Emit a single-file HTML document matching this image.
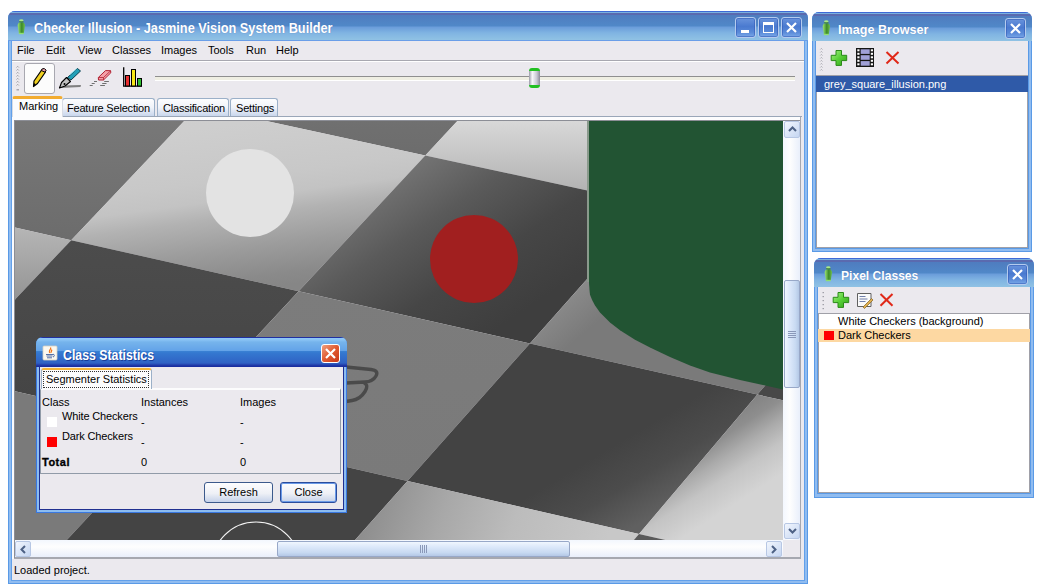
<!DOCTYPE html>
<html><head><meta charset="utf-8">
<style>
*{box-sizing:border-box;margin:0;padding:0}
html,body{width:1040px;height:587px;overflow:hidden;background:#fff;font-family:"Liberation Sans",sans-serif;font-size:11px;color:#000}
.abs{position:absolute}
.win{position:absolute;background:#90bcf0;border-radius:7px 7px 0 0;box-shadow:inset 0 0 0 1px #5a9ae6}
.tb{position:absolute;left:0;right:0;top:0;height:30px;border-radius:7px 7px 0 0;
 background:linear-gradient(#3d6ad6 0px,#3d6ad6 1px,#7ab0e0 1px,#7ab0e0 2px,#5a6aaf 2px,#5a6aaf 4px,#4f7cbf 4px,#5088c8 15px,#6a9cda 16px,#80b4e2 22px,#90c2e4 29px,#6a9ee8 29px)}
.ttl{position:absolute;color:#fff;font-weight:bold;font-size:13px;white-space:nowrap;text-shadow:0 0 1px rgba(60,90,160,.6)}
.face{position:absolute;background:#ebe9ee}
.tbtn{position:absolute;width:21px;height:21px;border:1px solid #b4cbee;border-radius:3px;
 background:linear-gradient(#6a94dc,#4a7ad0 45%,#5a8ad8 75%,#7aa8e8);box-shadow:inset 0 0 0 1px rgba(50,90,180,.55)}
.menu span{position:absolute;top:44px}
.tab{position:absolute;height:18px;top:98px;border:1px solid #9bb0c8;border-bottom:none;border-radius:3px 3px 0 0;
 background:linear-gradient(#fdfdfe,#f0f3f9 50%,#c9d6ec);padding:0 0 0 5px;line-height:18px;white-space:nowrap;letter-spacing:-0.2px}
.sbtn{position:absolute;width:16px;height:16px;border:1px solid #b7c7e4;border-radius:2px;background:linear-gradient(135deg,#f2f6fd,#c5d6f2)}
</style></head><body>

<!-- MAIN WINDOW -->
<div class="win" style="left:8px;top:11px;width:800px;height:573px">
  <div class="tb"></div>
</div>
<div class="abs" style="left:17px;top:19px;width:8px;height:15px">
  <svg width="9" height="16" viewBox="0 0 9 16"><defs><linearGradient id="jv" x1="0" x2="1"><stop offset="0" stop-color="#a0e878"/><stop offset="0.55" stop-color="#3c8a28"/><stop offset="1" stop-color="#70c050"/></linearGradient></defs><ellipse cx="4.3" cy="1.6" rx="2.2" ry="1.3" fill="#a8e888"/><rect x="2.2" y="2.4" width="4.2" height="1" fill="#2a6a20"/><path d="M1.8 3.4h5l1.3 2.6-1.3 8.2h-4.9l-1.3-8.2z" fill="url(#jv)"/><rect x="1.8" y="13.8" width="5" height="1.4" fill="#90e070"/></svg>
</div>
<div class="ttl" style="left:34px;top:21px;transform:scale(0.98,1.1);transform-origin:0 100%">Checker Illusion - Jasmine Vision System Builder</div>
<div class="tbtn" style="left:735px;top:17px"><div class="abs" style="left:5px;top:12px;width:8px;height:3px;background:#fff"></div></div>
<div class="tbtn" style="left:758px;top:17px"><div class="abs" style="left:4px;top:4px;width:11px;height:11px;border:1px solid #fff;border-top-width:3px"></div></div>
<div class="tbtn" style="left:781px;top:17px"><svg class="abs" style="left:3px;top:3px" width="13" height="13"><path d="M2 2L11 11M11 2L2 11" stroke="#fff" stroke-width="2.2"/></svg></div>

<div class="face" style="left:11px;top:41px;width:794px;height:540px;border:1px solid #62a0ea;border-top:none"></div>
<!-- menu -->
<div class="menu abs" style="left:0;top:0">
  <span style="left:17px">File</span><span style="left:46px">Edit</span><span style="left:78px">View</span><span style="left:112px">Classes</span><span style="left:161px">Images</span><span style="left:208px">Tools</span><span style="left:246px">Run</span><span style="left:276px">Help</span>
</div>
<div class="abs" style="left:12px;top:60px;width:792px;height:1px;background:#a8a8b0"></div>
<div class="abs" style="left:12px;top:61px;width:792px;height:1px;background:#fff"></div>

<!-- toolbar -->
<div class="abs" style="left:24px;top:63px;width:31px;height:31px;border:1px solid #a8a8b0;border-radius:3px;background:#fcfcfc"></div>
<svg class="abs" style="left:0;top:0" width="160" height="100" viewBox="0 0 160 100">
 <g fill="none" stroke="#9a9aa0" stroke-width="0.9">
  <path d="M16.5 67.5l1.2-1.2 1.2 1.2M16.5 70.5l1.2-1.2 1.2 1.2M16.5 73.5l1.2-1.2 1.2 1.2M16.5 76.5l1.2-1.2 1.2 1.2M16.5 79.5l1.2-1.2 1.2 1.2M16.5 82.5l1.2-1.2 1.2 1.2M16.5 85.5l1.2-1.2 1.2 1.2"/>
 </g>
 <rect x="16.5" y="89" width="2.5" height="1.5" fill="#a8a8b0"/>
 <!-- pencil -->
 <path d="M33.5 86.5 L34 81 L42 69.5 L45.5 72 L37.5 83.5 Z" fill="#f0d020" stroke="#000" stroke-width="1.2" stroke-linejoin="round"/>
 <path d="M41.3 70.5 L42.6 68.6 Q44.5 68 46.2 70.2 L45 72.2 Z" fill="#f0a0a8" stroke="#000" stroke-width="1"/>
 <path d="M33.5 86.5 L34 83 L35.8 84.3 Z" fill="#000"/>
 <!-- pen -->
 <path d="M59.5 86.5 L60.5 88 L80.5 87 L81 85 L63 85.5 Z" fill="#808080"/>
 <path d="M67.5 77.5 L77.5 68.5 L80.5 71 L71 80 Z" fill="#22a0b8" stroke="#0a4050" stroke-width="1"/>
 <path d="M70 74.5 L76.5 69" stroke="#80e0f0" stroke-width="1"/>
 <path d="M66.5 77.5 L70.5 81.5 L65 86 L59.5 88 L61.5 82.5 Z" fill="#c0c0c0" stroke="#000" stroke-width="1.1" stroke-linejoin="round"/>
 <circle cx="64.5" cy="84" r="1" fill="#000"/>
 <!-- eraser -->
 <path d="M98.3 77.5 L105.5 70.6 L110.6 70.7 L110.8 72.8 L103.5 80 L98.5 80 Z" fill="#f4a0a8" stroke="#b02030" stroke-width="1"/>
 <path d="M98.5 77.5 L103.5 77.5 L110.6 70.8 M103.5 77.5 L103.5 80" stroke="#b02030" stroke-width="0.8" fill="none"/>
 <path d="M94 81.5h3M104.2 81.5h4.7M91.7 83.5h3M102.2 83.5h4.3M89.7 85.5h3M100.2 85.5h4.7" stroke="#707070" stroke-width="1"/>
 <!-- chart -->
 <path d="M123.7 67.2 V86.2 H142" stroke="#000" stroke-width="1.3" fill="none"/>
 <rect x="125.5" y="75.5" width="4" height="10.5" fill="#e83030" stroke="#000" stroke-width="1"/>
 <rect x="131.5" y="69.5" width="4" height="16.5" fill="#f8e818" stroke="#000" stroke-width="1"/>
 <rect x="137.5" y="78.5" width="4" height="7.5" fill="#30c030" stroke="#000" stroke-width="1"/>
</svg>
<div class="abs" style="left:155px;top:76px;width:640px;height:1px;background:#8f8f8f"></div>
<div class="abs" style="left:155px;top:77px;width:640px;height:3px;background:#efeee2"></div>
<div class="abs" style="left:155px;top:80px;width:640px;height:1px;background:#fff"></div>
<div class="abs" style="left:529px;top:68px;width:11px;height:20px;border-radius:3px;background:linear-gradient(90deg,#9a9aa8,#f8f8fa 30%,#c8c8d4 70%,#8a8a98);border-top:3px solid #22c022;border-bottom:3px solid #22c022"></div>

<!-- tabs -->
<div class="tab" style="left:62px;width:93px;padding-left:4px">Feature Selection</div>
<div class="tab" style="left:157px;width:72px">Classification</div>
<div class="tab" style="left:230px;width:48px">Settings</div>
<div class="abs" style="left:12px;top:96px;width:51px;height:21px;border:1px solid #d8dce4;border-bottom:none;border-top:3px solid #f2ac30;border-radius:3px 3px 0 0;background:#fcfcfd;line-height:14px;padding-left:6px">Marking</div>
<div class="abs" style="left:63px;top:116px;width:739px;height:1px;background:#9aa6b8"></div>
<div class="abs" style="left:14px;top:117px;width:787px;height:4px;background:#fcfcfd"></div>

<!-- canvas -->
<svg class="abs" style="left:15px;top:121px" width="768" height="419" viewBox="15 121 768 419">
<defs>
<linearGradient id="c02" gradientUnits="userSpaceOnUse" x1="0" y1="121" x2="0" y2="240"><stop offset="0" stop-color="#787878"/><stop offset="1" stop-color="#6c6c6c"/></linearGradient>
<linearGradient id="c03" gradientUnits="userSpaceOnUse" x1="0" y1="227" x2="0" y2="300"><stop offset="0" stop-color="#b6b6b6"/><stop offset="1" stop-color="#949494"/></linearGradient>
<linearGradient id="c11" gradientUnits="userSpaceOnUse" x1="0" y1="121" x2="0" y2="160"><stop offset="0" stop-color="#707070"/><stop offset="1" stop-color="#6c6c6c"/></linearGradient>
<linearGradient id="c12" gradientUnits="userSpaceOnUse" x1="15.6" y1="118.8" x2="41.6" y2="316.8"><stop offset="0" stop-color="#cfcfcf"/><stop offset="0.17" stop-color="#cecece"/><stop offset="0.44" stop-color="#c8c8c8"/><stop offset="0.54" stop-color="#c3c3c3"/><stop offset="0.63" stop-color="#b2b2b2"/><stop offset="0.79" stop-color="#9c9c9c"/><stop offset="0.94" stop-color="#8a8a8a"/><stop offset="1" stop-color="#868686"/></linearGradient>
<linearGradient id="c13" gradientUnits="userSpaceOnUse" x1="0" y1="240" x2="0" y2="420"><stop offset="0" stop-color="#4c4c4c"/><stop offset="1" stop-color="#444444"/></linearGradient>
<linearGradient id="c14" gradientUnits="userSpaceOnUse" x1="0" y1="390" x2="0" y2="540"><stop offset="0" stop-color="#7a7a7a"/><stop offset="1" stop-color="#7a7a7a"/></linearGradient>
<linearGradient id="c21" gradientUnits="userSpaceOnUse" x1="0" y1="121" x2="0" y2="192"><stop offset="0" stop-color="#d8d8d8"/><stop offset="1" stop-color="#b2b2b2"/></linearGradient>
<linearGradient id="c22" gradientUnits="userSpaceOnUse" x1="440" y1="150" x2="540" y2="300"><stop offset="0" stop-color="#727272"/><stop offset="0.3" stop-color="#5a5a5a"/><stop offset="0.65" stop-color="#464646"/><stop offset="1" stop-color="#3e3e3e"/></linearGradient>
<linearGradient id="c23" gradientUnits="userSpaceOnUse" x1="0" y1="290" x2="0" y2="480"><stop offset="0" stop-color="#7c7c7c"/><stop offset="1" stop-color="#7a7a7a"/></linearGradient>
<linearGradient id="c24" gradientUnits="userSpaceOnUse" x1="0" y1="430" x2="0" y2="540"><stop offset="0" stop-color="#444444"/><stop offset="1" stop-color="#444444"/></linearGradient>
<linearGradient id="c32" gradientUnits="userSpaceOnUse" x1="575" y1="290" x2="600" y2="320"><stop offset="0" stop-color="#8a8a8a"/><stop offset="1" stop-color="#7a7a7a"/></linearGradient>
<linearGradient id="c33" gradientUnits="userSpaceOnUse" x1="640" y1="430" x2="681" y2="499"><stop offset="0" stop-color="#434343"/><stop offset="0.5" stop-color="#4c4c4c"/><stop offset="1" stop-color="#606060"/></linearGradient>
<linearGradient id="c34" gradientUnits="userSpaceOnUse" x1="380" y1="480" x2="600" y2="560"><stop offset="0" stop-color="#8e8e8e"/><stop offset="0.3" stop-color="#a8a8a8"/><stop offset="0.6" stop-color="#bcbcbc"/><stop offset="1" stop-color="#c8c8c8"/></linearGradient>
<linearGradient id="c42" gradientUnits="userSpaceOnUse" x1="0" y1="360" x2="0" y2="400"><stop offset="0" stop-color="#484848"/><stop offset="1" stop-color="#484848"/></linearGradient>
<linearGradient id="c43" gradientUnits="userSpaceOnUse" x1="725.7" y1="403.2" x2="774.3" y2="478.8"><stop offset="0" stop-color="#7c7c7c"/><stop offset="0.3" stop-color="#8e8e8e"/><stop offset="0.5" stop-color="#acacac"/><stop offset="0.7" stop-color="#c4c4c4"/><stop offset="1" stop-color="#d4d4d4"/></linearGradient>
<linearGradient id="c44" gradientUnits="userSpaceOnUse" x1="0" y1="530" x2="0" y2="540"><stop offset="0" stop-color="#5a5a5a"/><stop offset="1" stop-color="#5a5a5a"/></linearGradient>
</defs>
<path fill="url(#c02)" d="M13.0 119.0 L186.1 119.0 L71.2 240.2 L13.0 227.1Z"/>
<path fill="url(#c03)" d="M71.2 240.2 L13.0 301.5 L13.0 227.1Z"/>
<path fill="url(#c11)" d="M257.2 119.0 L459.2 119.0 L425.3 155.4Z"/>
<path fill="url(#c12)" d="M186.1 119.0 L257.2 119.0 L425.3 155.4 L298.6 291.3 L71.2 240.2Z"/>
<path fill="url(#c13)" d="M298.6 291.3 L172.0 427.1 L13.0 390.7 L13.0 301.5 L71.2 240.2Z"/>
<path fill="url(#c14)" d="M172.0 427.1 L64.9 542.0 L13.0 542.0 L13.0 390.7Z"/>
<path fill="url(#c21)" d="M459.2 119.0 L729.3 119.0 L653.0 204.8 L425.3 155.4Z"/>
<path fill="url(#c22)" d="M653.0 204.8 L529.9 343.4 L298.6 291.3 L425.3 155.4Z"/>
<path fill="url(#c23)" d="M529.9 343.4 L407.5 481.0 L172.0 427.1 L298.6 291.3Z"/>
<path fill="url(#c24)" d="M407.5 481.0 L353.3 542.0 L64.9 542.0 L172.0 427.1Z"/>
<path fill="url(#c32)" d="M785.0 233.4 L785.0 362.0 L757.4 394.6 L529.9 343.4 L653.0 204.8Z"/>
<path fill="url(#c33)" d="M757.4 394.6 L639.0 534.0 L407.5 481.0 L529.9 343.4Z"/>
<path fill="url(#c34)" d="M639.0 534.0 L632.2 542.0 L353.3 542.0 L407.5 481.0Z"/>
<path fill="url(#c42)" d="M785.0 362.0 L785.0 400.8 L757.4 394.6Z"/>
<path fill="url(#c43)" d="M785.0 400.8 L785.0 542.0 L674.2 542.0 L639.0 534.0 L757.4 394.6Z"/>
<path fill="url(#c44)" d="M674.2 542.0 L632.2 542.0 L639.0 534.0Z"/>
<circle cx="250" cy="193" r="44" fill="#e3e3e3"/>
<circle cx="474" cy="259" r="44" fill="#a11f1f"/>
<path d="M588 121 V282" stroke="#8a9a8c" stroke-width="2" fill="none"/>
<path d="M589 121 V283 L589.5 290 L590 294.8 L592 299.8 L595 305.4 L600 312.4 L610 322.6 L620 330.3 L635 339.7 L650 347.4 L670 357 L690 365.5 L710 372.5 L740 380 L783 389.5 V121Z" fill="#225433"/>
<path d="M346 367 L371 369.5 Q379 370.5 376 376 Q373 381.5 365 382 L346 383 M364 383 Q369 385 365 391.5 Q360 399.5 352 400.5 L346 401.5" fill="none" stroke="#454545" stroke-width="3.4" stroke-linejoin="round" opacity="0.9"/>
<circle cx="256" cy="566" r="44" fill="none" stroke="#f4f4f4" stroke-width="1.2"/>
</svg>

<!-- scrollbars -->
<div class="abs" style="left:783px;top:121px;width:17px;height:419px;background:linear-gradient(90deg,#f3f7fe,#fefefe 40%,#e9effb)"></div>
<div class="sbtn" style="left:784px;top:121px;height:17px"><svg class="abs" style="left:3px;top:4px" width="9" height="6"><path d="M1 5L4.5 1.5L8 5" stroke="#4d6185" stroke-width="2" fill="none"/></svg></div>
<div class="sbtn" style="left:784px;top:523px"><svg class="abs" style="left:3px;top:4px" width="9" height="6"><path d="M1 1L4.5 4.5L8 1" stroke="#4d6185" stroke-width="2" fill="none"/></svg></div>
<div class="abs" style="left:784px;top:280px;width:16px;height:108px;border:1px solid #98a8c8;border-radius:2px;background:linear-gradient(90deg,#f0f6fe,#dce8fa 35%,#c8daf2 75%,#b4c8e6)"><div class="abs" style="left:3px;top:50px;width:8px;height:7px;background:repeating-linear-gradient(#8a98b8 0 1px,transparent 1px 2px)"></div></div>
<div class="abs" style="left:15px;top:540px;width:768px;height:17px;background:linear-gradient(#f3f7fe,#fefefe 40%,#e9effb)"></div>
<div class="sbtn" style="left:15px;top:541px"><svg class="abs" style="left:4px;top:3px" width="6" height="9"><path d="M5 1L1.5 4.5L5 8" stroke="#4d6185" stroke-width="2" fill="none"/></svg></div>
<div class="sbtn" style="left:766px;top:541px"><svg class="abs" style="left:4px;top:3px" width="6" height="9"><path d="M1 1L4.5 4.5L1 8" stroke="#4d6185" stroke-width="2" fill="none"/></svg></div>
<div class="abs" style="left:277px;top:541px;width:293px;height:16px;border:1px solid #98a8c8;border-radius:2px;background:linear-gradient(#f0f6fe,#dce8fa 35%,#c8daf2 75%,#b4c8e6)"><div class="abs" style="left:142px;top:3px;width:7px;height:8px;background:repeating-linear-gradient(90deg,#8a98b8 0 1px,transparent 1px 2px)"></div></div>
<div class="abs" style="left:14px;top:557px;width:787px;height:2px;background:#a6a8b0"></div>
<div class="abs" style="left:12px;top:117px;width:2px;height:442px;background:#fbfbfd"></div>
<div class="abs" style="left:14px;top:120px;width:1px;height:438px;background:#8c8e96"></div>
<div class="abs" style="left:14px;top:120px;width:787px;height:1px;background:#8c8e96"></div>
<div class="abs" style="left:800px;top:117px;width:1px;height:442px;background:#a6a8b0"></div>

<!-- status -->
<div class="abs" style="left:14px;top:564px">Loaded project.</div>

<!-- IMAGE BROWSER -->
<div class="win" style="left:812px;top:12px;width:220px;height:240px">
  <div class="tb" style="height:29px"></div>
</div>
<div class="abs" style="left:822px;top:20px;width:8px;height:15px">
  <svg width="9" height="16" viewBox="0 0 9 16"><defs><linearGradient id="jv" x1="0" x2="1"><stop offset="0" stop-color="#a0e878"/><stop offset="0.55" stop-color="#3c8a28"/><stop offset="1" stop-color="#70c050"/></linearGradient></defs><ellipse cx="4.3" cy="1.6" rx="2.2" ry="1.3" fill="#a8e888"/><rect x="2.2" y="2.4" width="4.2" height="1" fill="#2a6a20"/><path d="M1.8 3.4h5l1.3 2.6-1.3 8.2h-4.9l-1.3-8.2z" fill="url(#jv)"/><rect x="1.8" y="13.8" width="5" height="1.4" fill="#90e070"/></svg>
</div>
<div class="ttl" style="left:838px;top:22px;transform:scaleX(0.97);transform-origin:0 0">Image Browser</div>
<div class="tbtn" style="left:1005px;top:18px"><svg class="abs" style="left:3px;top:3px" width="13" height="13"><path d="M2 2L11 11M11 2L2 11" stroke="#fff" stroke-width="2.2"/></svg></div>
<div class="face" style="left:815px;top:41px;width:214px;height:208px;border:1px solid #5a9ae6;border-top:none"></div>
<div class="abs" style="left:816px;top:75px;width:212px;height:173px;background:#fff;border:1px solid #a0a0a8"></div>
<div class="abs" style="left:816px;top:76px;width:212px;height:16px;background:#2f5aa8;color:#fff;padding-left:8px;line-height:16px">grey_square_illusion.png</div>
<svg class="abs" style="left:810px;top:40px" width="100" height="36" viewBox="810 40 100 36">
 <defs><linearGradient id="gp" x1="0" y1="0" x2="1" y2="1"><stop offset="0" stop-color="#a8f088"/><stop offset="0.5" stop-color="#58d038"/><stop offset="1" stop-color="#30a018"/></linearGradient></defs>
 <g fill="none" stroke="#a0a0a8" stroke-width="0.8"><path d="M820.3 49.5l1.1-1.1 1.1 1.1M820.3 52.5l1.1-1.1 1.1 1.1M820.3 55.5l1.1-1.1 1.1 1.1M820.3 58.5l1.1-1.1 1.1 1.1M820.3 61.5l1.1-1.1 1.1 1.1M820.3 64.5l1.1-1.1 1.1 1.1M820.3 67.5l1.1-1.1 1.1 1.1M820.3 70.5l1.1-1.1 1.1 1.1"/></g>
 <path d="M836 50.5h5.5v4.8h5.2v5.3h-5.2v4.8h-5.5v-4.8h-4.8v-5.3h4.8z" fill="url(#gp)" stroke="#2a8a18" stroke-width="1"/>
 <rect x="856" y="48" width="18" height="19" fill="#161616"/><rect x="860.7" y="49.3" width="9" height="4.6" fill="#a0a0d8"/><rect x="860.7" y="55.2" width="9" height="4.6" fill="#a0a0d8"/><rect x="860.7" y="61.1" width="9" height="4.6" fill="#a0a0d8"/><g fill="#fff"><rect x="857.3" y="49.3" width="2.2" height="2"/><rect x="870.8" y="49.3" width="2.2" height="2"/><rect x="857.3" y="52.8" width="2.2" height="2"/><rect x="870.8" y="52.8" width="2.2" height="2"/><rect x="857.3" y="56.3" width="2.2" height="2"/><rect x="870.8" y="56.3" width="2.2" height="2"/><rect x="857.3" y="59.8" width="2.2" height="2"/><rect x="870.8" y="59.8" width="2.2" height="2"/><rect x="857.3" y="63.3" width="2.2" height="2"/><rect x="870.8" y="63.3" width="2.2" height="2"/></g>
 <path d="M886.5 52 L898.5 63.5 M898.5 52 L886.5 63.5" stroke="#e02818" stroke-width="2"/>
</svg>

<!-- PIXEL CLASSES -->
<div class="win" style="left:814px;top:258px;width:220px;height:240px">
  <div class="tb" style="height:29px"></div>
</div>
<div class="abs" style="left:824px;top:266px;width:8px;height:15px">
  <svg width="9" height="16" viewBox="0 0 9 16"><defs><linearGradient id="jv" x1="0" x2="1"><stop offset="0" stop-color="#a0e878"/><stop offset="0.55" stop-color="#3c8a28"/><stop offset="1" stop-color="#70c050"/></linearGradient></defs><ellipse cx="4.3" cy="1.6" rx="2.2" ry="1.3" fill="#a8e888"/><rect x="2.2" y="2.4" width="4.2" height="1" fill="#2a6a20"/><path d="M1.8 3.4h5l1.3 2.6-1.3 8.2h-4.9l-1.3-8.2z" fill="url(#jv)"/><rect x="1.8" y="13.8" width="5" height="1.4" fill="#90e070"/></svg>
</div>
<div class="ttl" style="left:841px;top:268px;transform:scaleX(0.93);transform-origin:0 0">Pixel Classes</div>
<div class="tbtn" style="left:1007px;top:264px"><svg class="abs" style="left:3px;top:3px" width="13" height="13"><path d="M2 2L11 11M11 2L2 11" stroke="#fff" stroke-width="2.2"/></svg></div>
<div class="face" style="left:817px;top:287px;width:214px;height:207px;border:1px solid #5a9ae6;border-top:none"></div>
<div class="abs" style="left:818px;top:313px;width:212px;height:180px;background:#fff;border:1px solid #a0a0a8"></div>
<div class="abs" style="left:838px;top:314px;line-height:14px">White Checkers (background)</div>
<div class="abs" style="left:818px;top:329px;width:212px;height:13px;background:#fdd8a2"></div>
<div class="abs" style="left:824px;top:331px;width:10px;height:9px;background:#ff0000"></div>
<div class="abs" style="left:838px;top:328px;line-height:14px">Dark Checkers</div>
<svg class="abs" style="left:815px;top:287px" width="90" height="26" viewBox="815 287 90 26">
 <defs><linearGradient id="gp2" x1="0" y1="0" x2="1" y2="1"><stop offset="0" stop-color="#a8f088"/><stop offset="0.5" stop-color="#58d038"/><stop offset="1" stop-color="#30a018"/></linearGradient></defs>
 <g fill="#a0a0a8"><rect x="822.5" y="292" width="1.5" height="1.2"/><rect x="822.5" y="296" width="1.5" height="1.2"/><rect x="822.5" y="300" width="1.5" height="1.2"/><rect x="822.5" y="304" width="1.5" height="1.2"/><rect x="822.5" y="308" width="1.5" height="1.2"/></g>
 <path d="M838 292.5h5.5v4.8h5.2v5.3h-5.2v4.8h-5.5v-4.8h-4.8v-5.3h4.8z" fill="url(#gp2)" stroke="#2a8a18" stroke-width="1"/>
 <path d="M857.5 293.5h13.5v13h-13.5z" fill="#fafafa" stroke="#606060" stroke-width="1"/>
 <path d="M859.5 296.5h6M859.5 299h8M859.5 301.5h6" stroke="#6070a0" stroke-width="0.9"/>
 <path d="M863 307 L871.5 298.5 L873 300 L864.5 308.5 Z" fill="#e0b050" stroke="#806020" stroke-width="0.7"/>
 <path d="M880.5 294 L892.5 305.8 M892.5 294 L880.5 305.8" stroke="#e02818" stroke-width="2"/>
</svg>

<!-- CLASS STATISTICS DIALOG -->
<div class="abs" style="left:36px;top:337px;width:311px;height:176px;background:#8cbcf0;border-radius:7px 7px 0 0;box-shadow:inset 0 0 0 1px #3a78e0"></div>
<div class="abs" style="left:36px;top:337px;width:311px;height:30px;border-radius:7px 7px 0 0;background:linear-gradient(#2030a0 0px,#2030a0 1px,#90c8f8 1px,#88c2f4 3px,#76b4ec 5px,#62a2e8 14px,#3a82d4 14px,#3478d0 16px,#2f62c4 26px,#2a50b8 27px,#1a2ea0 29px)"></div>
<div class="face" style="left:39px;top:367px;width:305px;height:143px;border:1px solid #203090;border-top:none"></div>
<div class="ttl" style="left:63px;top:347px;font-size:14px;transform:scaleX(0.88);transform-origin:0 0;text-shadow:1px 1px 0 rgba(10,30,120,.6)">Class Statistics</div>
<svg class="abs" style="left:42px;top:345px" width="16" height="16" viewBox="0 0 16 16">
 <rect x="1" y="1" width="14" height="14" rx="1" fill="#fbf8f0" stroke="#d8d0c0" stroke-width="0.8"/>
 <path d="M8.5 2.5 C10 4 6 5.5 7.5 8 M9.5 4.5 C10.5 6 8.5 6.5 9 8" stroke="#f07010" stroke-width="1.2" fill="none"/>
 <path d="M4 9.5h7M4.5 11h6M5 12.8h5" stroke="#4060a0" stroke-width="0.9"/>
 <path d="M11 9.2c1.8 0 1.8 2.5 0 2.8" stroke="#4060a0" stroke-width="0.9" fill="none"/>
</svg>
<div class="abs" style="left:321px;top:344px;width:19px;height:19px;border:1px solid #fff;border-radius:3px;background:linear-gradient(135deg,#f0a080,#e05a30 50%,#c83818)"><svg class="abs" style="left:2px;top:2px" width="13" height="13"><path d="M2 2L11 11M11 2L2 11" stroke="#fff" stroke-width="2.2"/></svg></div>
<div class="abs" style="left:40px;top:388px;width:301px;height:86px;border:1px solid #919ba8;border-top:2px solid #fcfcfd"></div>
<div class="abs" style="left:41px;top:368px;width:111px;height:21px;border:1px solid #9bb0c8;border-bottom:none;border-top:2px solid #f4b43a;border-radius:3px 3px 0 0;background:#fcfcfd"></div>
<div class="abs" style="left:43px;top:371px;width:106px;height:17px;border:1px dotted #333;line-height:15px;padding-left:2px">Segmenter Statistics</div>
<div class="abs" style="left:42px;top:396px">Class</div>
<div class="abs" style="left:141px;top:396px">Instances</div>
<div class="abs" style="left:240px;top:396px">Images</div>
<div class="abs" style="left:47px;top:417px;width:10px;height:10px;background:#fff"></div>
<div class="abs" style="left:62px;top:410px;letter-spacing:-0.15px">White Checkers</div>
<div class="abs" style="left:141px;top:416px">-</div>
<div class="abs" style="left:240px;top:416px">-</div>
<div class="abs" style="left:47px;top:437px;width:10px;height:10px;background:#ff0000"></div>
<div class="abs" style="left:62px;top:430px;letter-spacing:-0.15px">Dark Checkers</div>
<div class="abs" style="left:141px;top:436px">-</div>
<div class="abs" style="left:240px;top:436px">-</div>
<div class="abs" style="left:42px;top:456px;font-weight:bold;letter-spacing:0.5px;-webkit-text-stroke:0.3px #000">Total</div>
<div class="abs" style="left:141px;top:456px">0</div>
<div class="abs" style="left:240px;top:456px">0</div>
<div class="abs" style="left:204px;top:482px;width:69px;height:21px;border:1px solid #3c5a8c;border-radius:3px;background:linear-gradient(#fdfdfe,#eef0f6 55%,#c6d2ea);text-align:center;line-height:19px">Refresh</div>
<div class="abs" style="left:280px;top:482px;width:57px;height:21px;border:1px solid #2a4c9c;border-radius:3px;background:linear-gradient(#fdfdfe,#eef0f6 55%,#c6d2ea);box-shadow:inset 0 0 0 1px #6a9ae8;text-align:center;line-height:19px">Close</div>

</body></html>
